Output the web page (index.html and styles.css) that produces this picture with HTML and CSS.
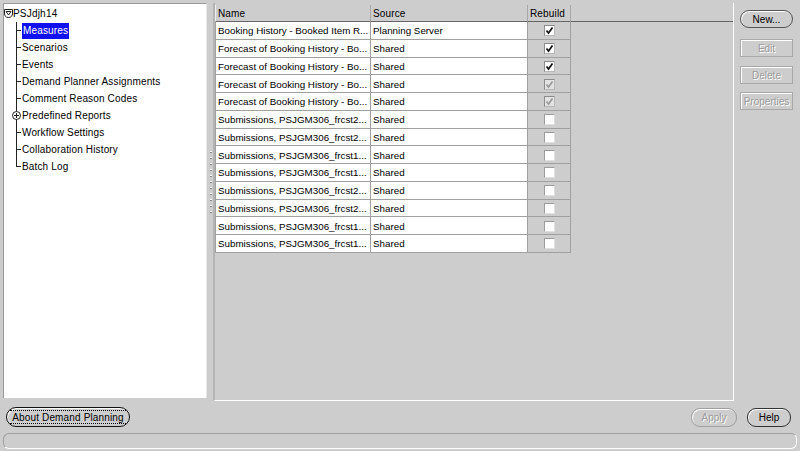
FILE: index.html
```html
<!DOCTYPE html>
<html lang="en">
<head>
    <meta charset="UTF-8">
    <title>Demand Planning Administration</title>
    <link rel="stylesheet" href="styles.css">
</head>
<body>
    <div class="app">
        <div class="main">
            <!-- navigation tree -->
            <div class="tree">
                <div class="tree-root">
                    <svg class="node-icon" width="9" height="9" viewBox="0 0 9 9">
                        <path d="M0.5 0.5 H8.5 V4 Q8.5 8.5 4.5 8.5 Q0.5 8.5 0.5 4 Z" fill="#fff" stroke="#222"/>
                        <path d="M2 2.5 H7 L4.5 6 Z" fill="none" stroke="#222"/>
                    </svg>PSJdjh14
                </div>
                <ul class="tree-children">
                    <li><span class="selected">Measures</span></li>
                    <li>Scenarios</li>
                    <li>Events</li>
                    <li>Demand Planner Assignments</li>
                    <li>Comment Reason Codes</li>
                    <li class="collapsed">
                        <svg class="expand-icon" width="9" height="9" viewBox="0 0 9 9">
                            <circle cx="4.5" cy="4.5" r="4" fill="#fff" stroke="#222"/>
                            <path d="M2 4.5 H7 M4.5 2 V7" stroke="#222"/>
                        </svg>Predefined Reports
                    </li>
                    <li>Workflow Settings</li>
                    <li>Collaboration History</li>
                    <li>Batch Log</li>
                </ul>
            </div>

            <div class="splitter"><div class="grip"></div></div>

            <!-- measures table -->
            <div class="content">
                <div class="grid" id="grid">
                    <div class="hcell">Name</div>
                    <div class="hcell">Source</div>
                    <div class="hcell">Rebuild</div>
                    <div class="hcell filler"></div>
                </div>
            </div>

            <div class="side">
                <button class="pill">New...</button>
                <button class="square disabled">Edit</button>
                <button class="square disabled">Delete</button>
                <button class="square disabled">Properties</button>
            </div>
        </div>

        <div class="footer">
            <button class="pill about"><span class="focus">About Demand Planning</span></button>
            <div class="spacer"></div>
            <button class="pill disabled apply">Apply</button>
            <button class="pill help">Help</button>
        </div>
        <div class="status"></div>
    </div>

    <script>
        var rows = [
            ['Booking History - Booked Item R...', 'Planning Server', 'on'],
            ['Forecast of Booking History - Bo...', 'Shared', 'on'],
            ['Forecast of Booking History - Bo...', 'Shared', 'on'],
            ['Forecast of Booking History - Bo...', 'Shared', 'dis'],
            ['Forecast of Booking History - Bo...', 'Shared', 'dis'],
            ['Submissions, PSJGM306_frcst2...', 'Shared', 'off'],
            ['Submissions, PSJGM306_frcst2...', 'Shared', 'off'],
            ['Submissions, PSJGM306_frcst1...', 'Shared', 'off'],
            ['Submissions, PSJGM306_frcst1...', 'Shared', 'off'],
            ['Submissions, PSJGM306_frcst2...', 'Shared', 'off'],
            ['Submissions, PSJGM306_frcst2...', 'Shared', 'off'],
            ['Submissions, PSJGM306_frcst1...', 'Shared', 'off'],
            ['Submissions, PSJGM306_frcst1...', 'Shared', 'off']
        ];

        var grid = document.getElementById('grid');
        var tick = '<svg width="9" height="9" viewBox="0 0 9 9"><polyline points="1.5,4.5 3.5,7 7.5,1.5" fill="none" stroke-width="1.7"/></svg>';

        rows.forEach(function (r) {
            var html = '<div class="cell first">' + r[0] + '</div>' +
                       '<div class="cell">' + r[1] + '</div>' +
                       '<div class="cell check-cell"><span class="checkbox ' + r[2] + '">' +
                       (r[2] === 'off' ? '' : tick) + '</span></div>' +
                       '<div class="empty"></div>';
            grid.insertAdjacentHTML('beforeend', html);
        });
    </script>
</body>
</html>
```

FILE: styles.css
```css
body {
    margin: 0;
    width: 800px;
    height: 451px;
    overflow: hidden;
    background: #cdcdcd;
    font-family: "Liberation Sans", Arial, sans-serif;
    font-size: 10px;
    color: #000;
}

button {
    font: inherit;
    color: #000;
    margin: 0;
    padding: 0;
    background: #cdcdcd;
    cursor: default;
}

.app {
    padding: 3px 3px 0 3px;
}

.main {
    display: flex;
    height: 398px;
}

/* tree */
.tree {
    width: 204px;
    height: 395px;
    box-sizing: border-box;
    background: #fff;
    border-top: 1px solid #9a9a9a;
    border-left: 1px solid #9a9a9a;
    border-right: 1px solid #e6e6e6;
    padding-top: 1px;
}

.tree-root {
    height: 17px;
    line-height: 17px;
    letter-spacing: 0.2px;
}

.node-icon {
    vertical-align: -1px;
}

.tree-children {
    list-style: none;
    margin: 0 0 0 12px;
    padding: 0;
}

.tree-children li {
    position: relative;
    height: 17px;
    line-height: 17px;
    padding-left: 6px;
    letter-spacing: 0.15px;
    white-space: nowrap;
}

.tree-children li::before {
    content: "";
    position: absolute;
    left: 0;
    top: 8px;
    width: 5px;
    border-top: 1px solid #222;
}

.tree-children li::after {
    content: "";
    position: absolute;
    left: 0;
    top: 0;
    bottom: 0;
    border-left: 1px solid #222;
}

.tree-children li:last-child::after {
    bottom: 8px;
}

.selected {
    display: inline-block;
    height: 16px;
    line-height: 16px;
    padding: 0 1px;
    background: #1010f0;
    color: #fff;
}

.expand-icon {
    position: absolute;
    left: -4px;
    top: 4px;
    z-index: 1;
}

/* splitter */
.splitter {
    width: 6px;
    position: relative;
}

.grip {
    position: absolute;
    left: 3px;
    top: 148px;
    width: 2px;
    height: 62px;
    background: repeating-linear-gradient(to bottom, #fff 0 1px, #8a8a8a 1px 2px, transparent 2px 6px);
}

/* table area */
.content {
    width: 521px;
    box-sizing: border-box;
    border-left: 2px solid #b4b4b4;
    border-right: 1px solid #fff;
    border-bottom: 1px solid #fff;
    padding-top: 2px;
}

.grid {
    display: grid;
    grid-template-columns: 156px 157px 43px 1fr;
    grid-template-rows: 17px repeat(13, 17.75px);
}

.hcell {
    display: flex;
    align-items: center;
    padding-left: 2px;
    background: #cdcdcd;
    border-right: 1px solid #a8a8a8;
    border-bottom: 1px solid #666;
    letter-spacing: 0.15px;
}

.hcell:first-child {
    border-left: 1px solid #eee;
}

.hcell.filler {
    border-right: none;
}

.cell {
    display: flex;
    align-items: center;
    padding-left: 2px;
    padding-top: 1px;
    background: #fff;
    border-right: 1px solid #a0a0a0;
    border-bottom: 1px solid #a0a0a0;
    white-space: nowrap;
    overflow: hidden;
    font-size: 9.8px;
}

.cell.first {
    border-left: 1px solid #a0a0a0;
}

.check-cell {
    background: #cdcdcd;
    justify-content: center;
    padding-left: 0;
}

.checkbox {
    width: 11px;
    height: 11px;
    box-sizing: border-box;
    display: flex;
    align-items: center;
    justify-content: center;
    background: #fff;
    border: 1px solid #8c8c8c;
    border-right-color: #b8b8b8;
    border-bottom-color: #b8b8b8;
}

.checkbox.on svg {
    stroke: #111;
}

.checkbox.dis {
    background: #e2e2e2;
}

.checkbox.dis svg {
    stroke: #9a9a9a;
}

.checkbox.off {
    border-color: #9c9c9c #e0e0e0 #e0e0e0 #9c9c9c;
}

/* right buttons */
.side {
    flex: 1;
    display: flex;
    flex-direction: column;
    padding: 7px 0 0 6px;
}

.pill {
    height: 18px;
    border-radius: 9px;
    border: 1px solid #555;
    box-shadow: inset 1px 1px 0 #fff;
}

.side .pill {
    width: 53px;
}

.square {
    width: 53px;
    height: 18px;
    border: 1px solid #a8a8a8;
    box-shadow: inset 1px 1px 0 #fff;
}

.side .square {
    margin-top: 9px;
}

.side .square:nth-child(2) {
    margin-top: 11px;
}

.side .square:nth-child(4) {
    margin-top: 8px;
}

.disabled {
    color: #9c9c9c;
    text-shadow: 1px 1px 0 #fff;
}

.pill.disabled {
    border-color: #a0a0a0;
}

/* footer */
.footer {
    display: flex;
    align-items: center;
    height: 32px;
    padding: 0 6px 0 3px;
}

.about {
    width: 124px;
    height: 20px;
    border-radius: 10px;
    border-color: #111;
    display: flex;
    align-items: center;
    justify-content: center;
}

.focus {
    border-bottom: 1px dotted #000;
    border-top: 1px dotted #000;
    line-height: 11px;
    padding: 1px 2px 0;
    letter-spacing: 0.15px;
}

.spacer {
    flex: 1;
}

.apply {
    width: 46px;
    height: 19px;
}

.help {
    width: 44px;
    height: 19px;
    margin-left: 10px;
    border-color: #333;
}

.status {
    width: 794px;
    height: 16px;
    box-sizing: border-box;
    border-radius: 6px;
    border: 1px solid;
    border-color: #a0a0a0 #fff #fff #a0a0a0;
}
```
